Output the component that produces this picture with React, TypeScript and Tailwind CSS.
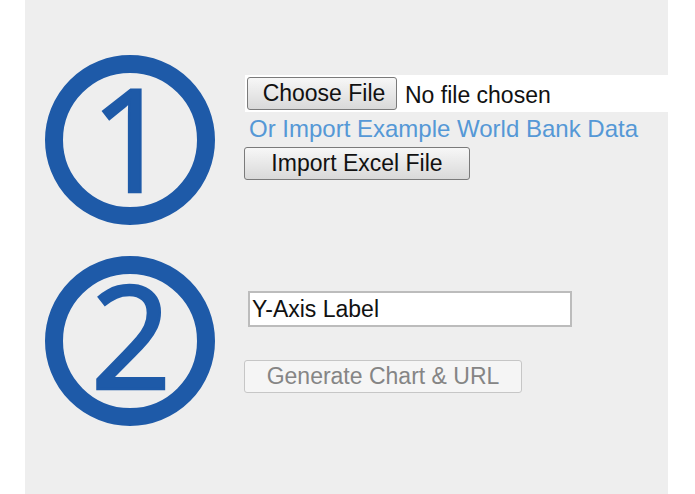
import React from "react";

function StepCircle({ n, baseline }: { n: string; baseline: number }) {
  return (
    <svg width="170" height="170" viewBox="0 0 170 170" overflow="visible" className="shrink-0 overflow-visible">
      <circle cx="85" cy="85" r="76" fill="none" stroke="#1e5aa8" strokeWidth="18" />
      <text
        x="86"
        y={baseline}
        textAnchor="middle"
        fill="#1e5aa8"
        stroke="#1e5aa8"
        strokeWidth="2.5"
        strokeLinejoin="miter"
        fontFamily="'Open Sans', 'Noto Sans', sans-serif"
        fontWeight="400"
        fontSize="142"
      >
        {n}
      </text>
    </svg>
  );
}

const btn =
  "h-[33px] flex items-center justify-center rounded-[3px] border border-[#7a7a7a] bg-linear-to-b from-[#f7f7f7] to-[#d9d9d9] text-[23px] text-[#111]";

export default function App() {
  return (
    <div className="flex w-[695px] h-[494px] bg-white font-['Liberation_Sans',Arial,sans-serif]">
      <div className="w-[25px] shrink-0" />
      <div className="w-[643px] h-full shrink-0 bg-[#eeeeee] pt-[55px] pl-[20px]">
        <div className="flex">
          <StepCircle n="1" baseline={137} />
          <div className="ml-[29px] pt-[20px] flex-1">
            <div className="ml-[1px] h-[37px] bg-white flex items-center pl-[2px]">
              <div className={btn + " w-[150px] pl-[4px]"}>Choose File</div>
              <span className="ml-[8px] text-[23px] text-[#111] pt-[4px]">No file chosen</span>
            </div>
            <div className="mt-[3px] pl-[5px] text-[24px] leading-[27px] text-[#5598d6]">
              Or Import Example World Bank Data
            </div>
            <div className={btn + " mt-[5px] w-[226px]"}>Import Excel File</div>
          </div>
        </div>
        <div className="flex mt-[31px]">
          <StepCircle n="2" baseline={133} />
          <div className="ml-[29px] pt-[35px] flex-1">
            <input
              readOnly
              defaultValue="Y-Axis Label"
              className="ml-[4px] block w-[324px] h-[36px] border-2 border-[#bcbcbc] bg-white pl-[2px] text-[23px] text-[#111] outline-none font-['Liberation_Sans',Arial,sans-serif]"
            />
            <div className="mt-[33px] w-[278px] h-[33px] flex items-center justify-center rounded-[3px] border border-[#c6c6c6] bg-[#f5f5f5] text-[23px] text-[#858585]">
              Generate Chart &amp; URL
            </div>
          </div>
        </div>
      </div>
      <div className="flex-1" />
    </div>
  );
}
